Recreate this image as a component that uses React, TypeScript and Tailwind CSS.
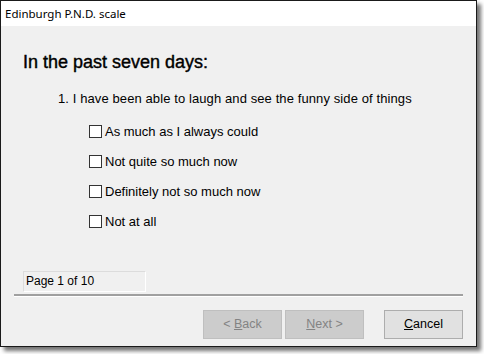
import React from "react";

const options = [
  "As much as I always could",
  "Not quite so much now",
  "Definitely not so much now",
  "Not at all",
];

const App: React.FC = () => {
  return (
    <div className="w-[484px] h-[354px] bg-white font-['Liberation_Sans',sans-serif]">
      <div className="w-[477px] h-[347px] border border-[#1a1a1a] flex flex-col bg-[#f0f0f0] shadow-[4px_4px_4px_rgba(0,0,0,0.55)]">
        <div className="h-[25px] bg-white flex items-center px-1 text-[11.5px] text-black font-['Noto_Sans',sans-serif]">
          Edinburgh P.N.D. scale
        </div>
        <div className="flex-1 flex flex-col">
          <h1 className="mt-[25px] ml-[22px] text-[18px] leading-[22px] font-normal text-black [-webkit-text-stroke:0.4px_black]">
            In the past seven days:
          </h1>
          <p className="mt-[18px] ml-[57px] text-[13px] leading-[16px] text-black tracking-[0.1px]">
            1. I have been able to laugh and see the funny side of things
          </p>
          <div className="mt-[17px] ml-[88px] flex flex-col gap-[15px]">
            {options.map((o) => (
              <label key={o} className="flex items-center gap-[3px] text-[13px] leading-[15px] text-black">
                <span className="w-[13px] h-[13px] border border-[#333] bg-white" />
                {o}
              </label>
            ))}
          </div>
          <div className="mt-[42px] ml-[22px] w-[123px] h-[21px] border border-[#dcdcdc] border-r-white border-b-white px-[2px] text-[12px] leading-[18px] text-black">
            Page 1 of 10
          </div>
          <div className="mt-[2px] mx-[13px] h-[3px] bg-[#a0a0a0] border-b border-white" />
          <div className="mt-[13px] mr-[13px] flex justify-end">
            <div className="flex gap-[3px]">
              <button className="w-[79px] h-[29px] bg-[#cccccc] border border-[#bfbfbf] text-[12.5px] text-[#838383]">
                &lt; <u>B</u>ack
              </button>
              <button className="w-[79px] h-[29px] bg-[#cccccc] border border-[#bfbfbf] text-[12.5px] text-[#838383]">
                <u>N</u>ext &gt;
              </button>
            </div>
            <button className="ml-[20px] w-[79px] h-[29px] bg-[#e1e1e1] border border-[#adadad] text-[12.5px] text-black">
              <u>C</u>ancel
            </button>
          </div>
        </div>
      </div>
    </div>
  );
};

export default App;
